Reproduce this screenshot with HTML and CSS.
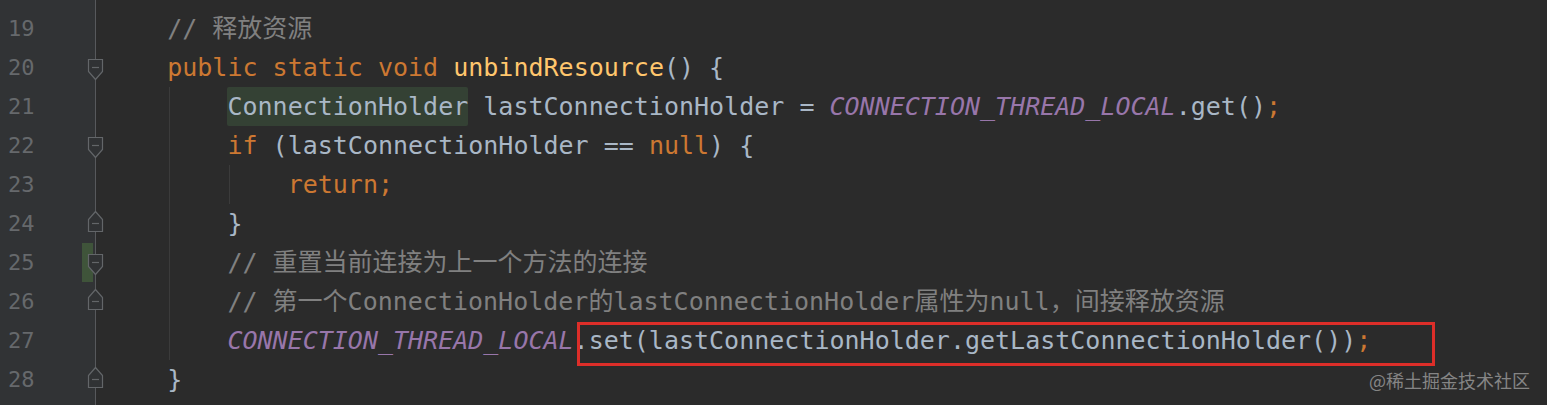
FILE: index.html
```html
<!DOCTYPE html>
<html lang="zh">
<head>
<meta charset="utf-8">
<title>unbindResource</title>
<link rel="stylesheet" href="styles.css">
</head>
<body>
<div class="editor">
  <div class="gutter">
    <div class="row"><span class="ln">19</span><span class="fold"></span></div>
    <div class="row"><span class="ln">20</span><span class="fold"><svg class="mk" viewBox="0 0 17 39" width="17" height="39"><path d="M1.5 11.5 H15.5 V23.5 L8.5 31.5 L1.5 23.5 Z"/><path d="M5 19.5 H12"/></svg></span></div>
    <div class="row"><span class="ln">21</span><span class="fold"></span></div>
    <div class="row"><span class="ln">22</span><span class="fold"><svg class="mk" viewBox="0 0 17 39" width="17" height="39"><path d="M1.5 11.5 H15.5 V23.5 L8.5 31.5 L1.5 23.5 Z"/><path d="M5 19.5 H12"/></svg></span></div>
    <div class="row"><span class="ln">23</span><span class="fold"></span></div>
    <div class="row"><span class="ln">24</span><span class="fold"><svg class="mk" viewBox="0 0 17 39" width="17" height="39"><path d="M8.5 7.5 L15.5 15.5 V27.5 H1.5 V15.5 Z"/><path d="M5 19.5 H12"/></svg></span></div>
    <div class="row changed"><span class="ln">25</span><span class="fold"><svg class="mk" viewBox="0 0 17 39" width="17" height="39"><path d="M1.5 11.5 H15.5 V23.5 L8.5 31.5 L1.5 23.5 Z"/><path d="M5 19.5 H12"/></svg></span></div>
    <div class="row"><span class="ln">26</span><span class="fold"><svg class="mk" viewBox="0 0 17 39" width="17" height="39"><path d="M8.5 7.5 L15.5 15.5 V27.5 H1.5 V15.5 Z"/><path d="M5 19.5 H12"/></svg></span></div>
    <div class="row"><span class="ln">27</span><span class="fold"></span></div>
    <div class="row"><span class="ln">28</span><span class="fold"><svg class="mk" viewBox="0 0 17 39" width="17" height="39"><path d="M8.5 7.5 L15.5 15.5 V27.5 H1.5 V15.5 Z"/><path d="M5 19.5 H12"/></svg></span></div>
  </div>
  <div class="code">
<div class="line">    <span class="c">// 释放资源</span></div>
<div class="line">    <span class="k">public static void</span> <span class="f">unbindResource</span>() {</div>
<div class="line g1">        <span class="hl">ConnectionHolder</span> lastConnectionHolder = <span class="s">CONNECTION_THREAD_LOCAL</span>.get()<span class="k">;</span></div>
<div class="line g1">        <span class="k">if</span> (lastConnectionHolder == <span class="k">null</span>) {</div>
<div class="line g1 g2">            <span class="k">return;</span></div>
<div class="line g1">        }</div>
<div class="line g1">        <span class="c">// 重置当前连接为上一个方法的连接</span></div>
<div class="line g1">        <span class="c">// 第一个ConnectionHolder的lastConnectionHolder属性为null，间接释放资源</span></div>
<div class="line g1">        <span class="s">CONNECTION_THREAD_LOCAL</span>.set(lastConnectionHolder.getLastConnectionHolder())<span class="k">;</span></div>
<div class="line">    }</div>
  </div>
  <div class="annot"></div>
  <div class="wm">@稀土掘金技术社区</div>
</div>
</body>
</html>
```
FILE: styles.css
```css
html, body {
  margin: 0;
  padding: 0;
  background: #2b2b2b;
}

.editor {
  position: relative;
  display: flex;
  width: 1547px;
  height: 405px;
  overflow: hidden;
  background: #2b2b2b;
}

.gutter {
  width: 104px;
  flex: none;
  padding-top: 9px;
  box-sizing: border-box;
  background: linear-gradient(to right, #313335 0 95px, #57595c 95px 96px, #2b2b2b 96px);
}

.row {
  display: flex;
  height: 39px;
}

.ln {
  width: 87px;
  box-sizing: border-box;
  padding-left: 8px;
  font-family: "DejaVu Sans Mono", monospace;
  font-size: 22px;
  line-height: 39px;
  color: #66696c;
}

.fold {
  width: 17px;
  height: 39px;
}

.row.changed .ln {
  background: linear-gradient(to right, transparent 82px, #3f543a 82px);
}

.row.changed .fold {
  background: linear-gradient(to right, #3f543a 0 6px, transparent 6px);
}

.mk {
  display: block;
}

.mk path {
  fill: #303234;
  stroke: #636669;
  stroke-width: 1.2;
  stroke-linejoin: miter;
}

.mk path + path {
  fill: none;
}

.code {
  flex: 1;
  padding-top: 9px;
  font-family: "DejaVu Sans Mono", "Noto Sans CJK SC", monospace;
  font-size: 25px;
  color: #a9b7c6;
}

.line {
  height: 39px;
  line-height: 39px;
  padding-left: 3px;
  white-space: pre;
}

.line.g1 {
  background: linear-gradient(#3b3b3b, #3b3b3b) no-repeat 65px 0 / 1px 100%;
}

.line.g1.g2 {
  background:
    linear-gradient(#3b3b3b, #3b3b3b) no-repeat 65px 0 / 1px 100%,
    linear-gradient(#3b3b3b, #3b3b3b) no-repeat 125px 0 / 1px 100%;
}

.c { color: #808080; }
.k { color: #cc7832; }
.f { color: #ffc66d; }
.s { color: #9876aa; font-style: italic; }

.hl {
  display: inline-block;
  height: 39px;
  line-height: 39px;
  vertical-align: top;
  background: #344134;
  border-radius: 2px;
}

.annot {
  position: absolute;
  left: 577px;
  top: 322px;
  width: 858px;
  height: 44px;
  box-sizing: border-box;
  border: 3px solid #dd2e29;
}

.wm {
  position: absolute;
  right: 17px;
  top: 368px;
  font-family: "Noto Sans CJK SC", sans-serif;
  font-size: 18px;
  line-height: 24px;
  color: #858585;
}
```
